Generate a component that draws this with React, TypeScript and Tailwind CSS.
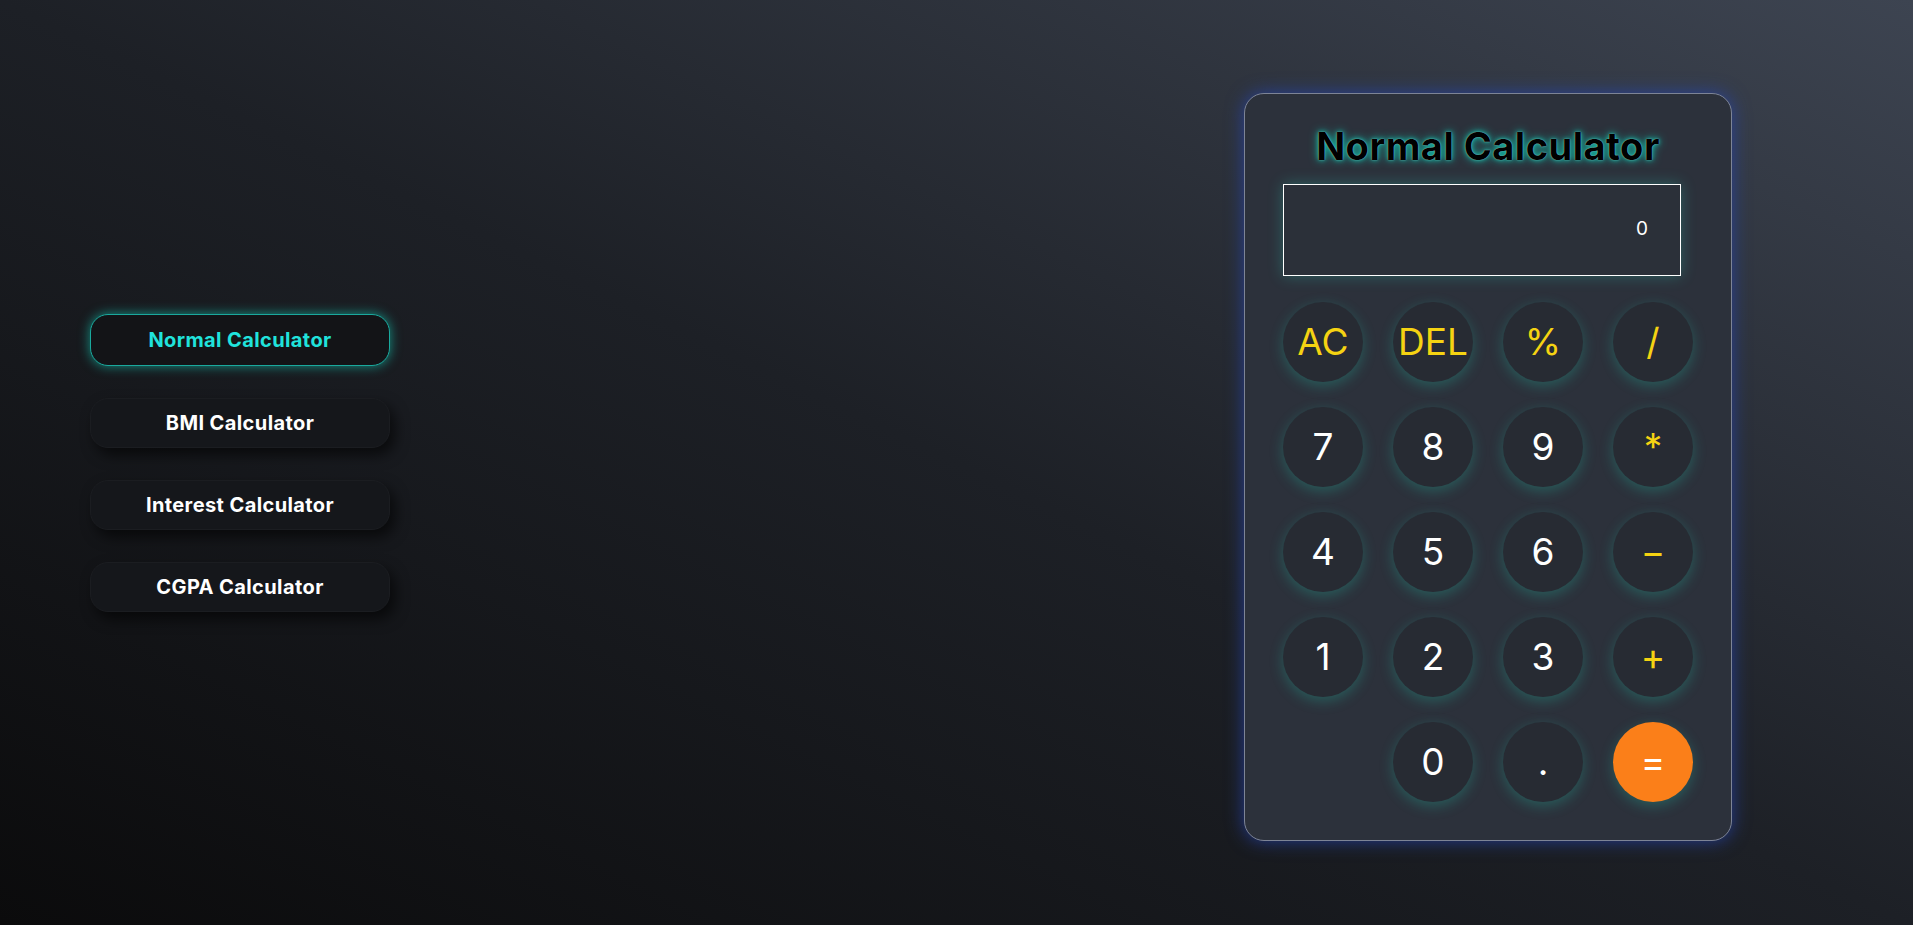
import { useState } from "react";

const navItems = ["Normal Calculator", "BMI Calculator", "Interest Calculator", "CGPA Calculator"];

type Key = { label: string; kind: "op" | "num" | "eq" | "blank" };

const keys: Key[] = [
  { label: "AC", kind: "op" },
  { label: "DEL", kind: "op" },
  { label: "%", kind: "op" },
  { label: "/", kind: "op" },
  { label: "7", kind: "num" },
  { label: "8", kind: "num" },
  { label: "9", kind: "num" },
  { label: "*", kind: "op" },
  { label: "4", kind: "num" },
  { label: "5", kind: "num" },
  { label: "6", kind: "num" },
  { label: "−", kind: "op" },
  { label: "1", kind: "num" },
  { label: "2", kind: "num" },
  { label: "3", kind: "num" },
  { label: "+", kind: "op" },
  { label: "", kind: "blank" },
  { label: "0", kind: "num" },
  { label: ".", kind: "num" },
  { label: "=", kind: "eq" },
];

function keyClassName(kind: Key["kind"]) {
  if (kind === "eq") return "bg-[#fb7f19] text-white shadow-[0_4px_14px_rgba(34,197,170,0.3)]";
  if (kind === "op") return "bg-[#272b33] text-[#f5d312] shadow-[0_4px_14px_rgba(34,197,170,0.3)]";
  return "bg-[#272b33] text-white shadow-[0_4px_14px_rgba(34,197,170,0.3)]";
}

export default function App() {
  const [active, setActive] = useState(0);
  const [display] = useState("0");

  return (
    <div className="flex h-[925px] w-full items-center bg-[linear-gradient(to_top_right,#0b0b0c,#1d2026_50%,#3d4451)] font-['Inter','Noto_Sans',sans-serif]">
      <nav className="ml-[90px] flex w-[300px] flex-col gap-8">
        {navItems.map((item, i) => (
          <button
            key={item}
            type="button"
            onClick={() => setActive(i)}
            className={
              i === active
                ? "h-[52px] rounded-[18px] border border-[#1aa99d] bg-[#131417] text-[20px] font-bold tracking-[0.4px] text-[#20e3dc] shadow-[0_0_12px_rgba(20,184,166,0.75)]"
                : "h-[50px] rounded-[18px] border border-[#1b1d21] bg-[#15171b] text-[20px] font-bold tracking-[0.4px] text-white shadow-[5px_7px_14px_rgba(0,0,0,0.6)]"
            }
          >
            {item}
          </button>
        ))}
      </nav>

      <div className="mr-[181px] ml-auto mt-[8px] flex h-[748px] w-[488px] flex-col rounded-[20px] border border-[#7d8496] bg-[#2c313b] px-[38px] pt-[28px] shadow-[0_0_18px_rgba(37,70,180,0.75)]">
        <h1 className="h-[48px] text-center text-[38px] leading-[48px] font-bold tracking-[0.5px] text-black [text-shadow:0_0_1px_#cbd5e1,0_0_10px_#14b8a6,0_0_4px_#14b8a6]">
          Normal Calculator
        </h1>

        <div className="mt-[14px] flex h-[92px] w-[398px] items-center justify-end border border-white bg-[#2b3039] pr-[32px] text-[19px] text-white shadow-[0_0_14px_rgba(45,212,191,0.3)]">
          {display}
        </div>

        <div className="mt-[26px] grid grid-cols-[repeat(4,80px)] gap-x-[30px] gap-y-[25px]">
          {keys.map((k, i) =>
            k.kind === "blank" ? (
              <div key={i} className="h-[80px] w-[80px]" />
            ) : (
              <button
                key={i}
                type="button"
                className={`flex h-[80px] w-[80px] items-center justify-center rounded-full text-[37px] font-normal ${keyClassName(k.kind)}`}
              >
                {k.label}
              </button>
            ),
          )}
        </div>
      </div>
    </div>
  );
}
